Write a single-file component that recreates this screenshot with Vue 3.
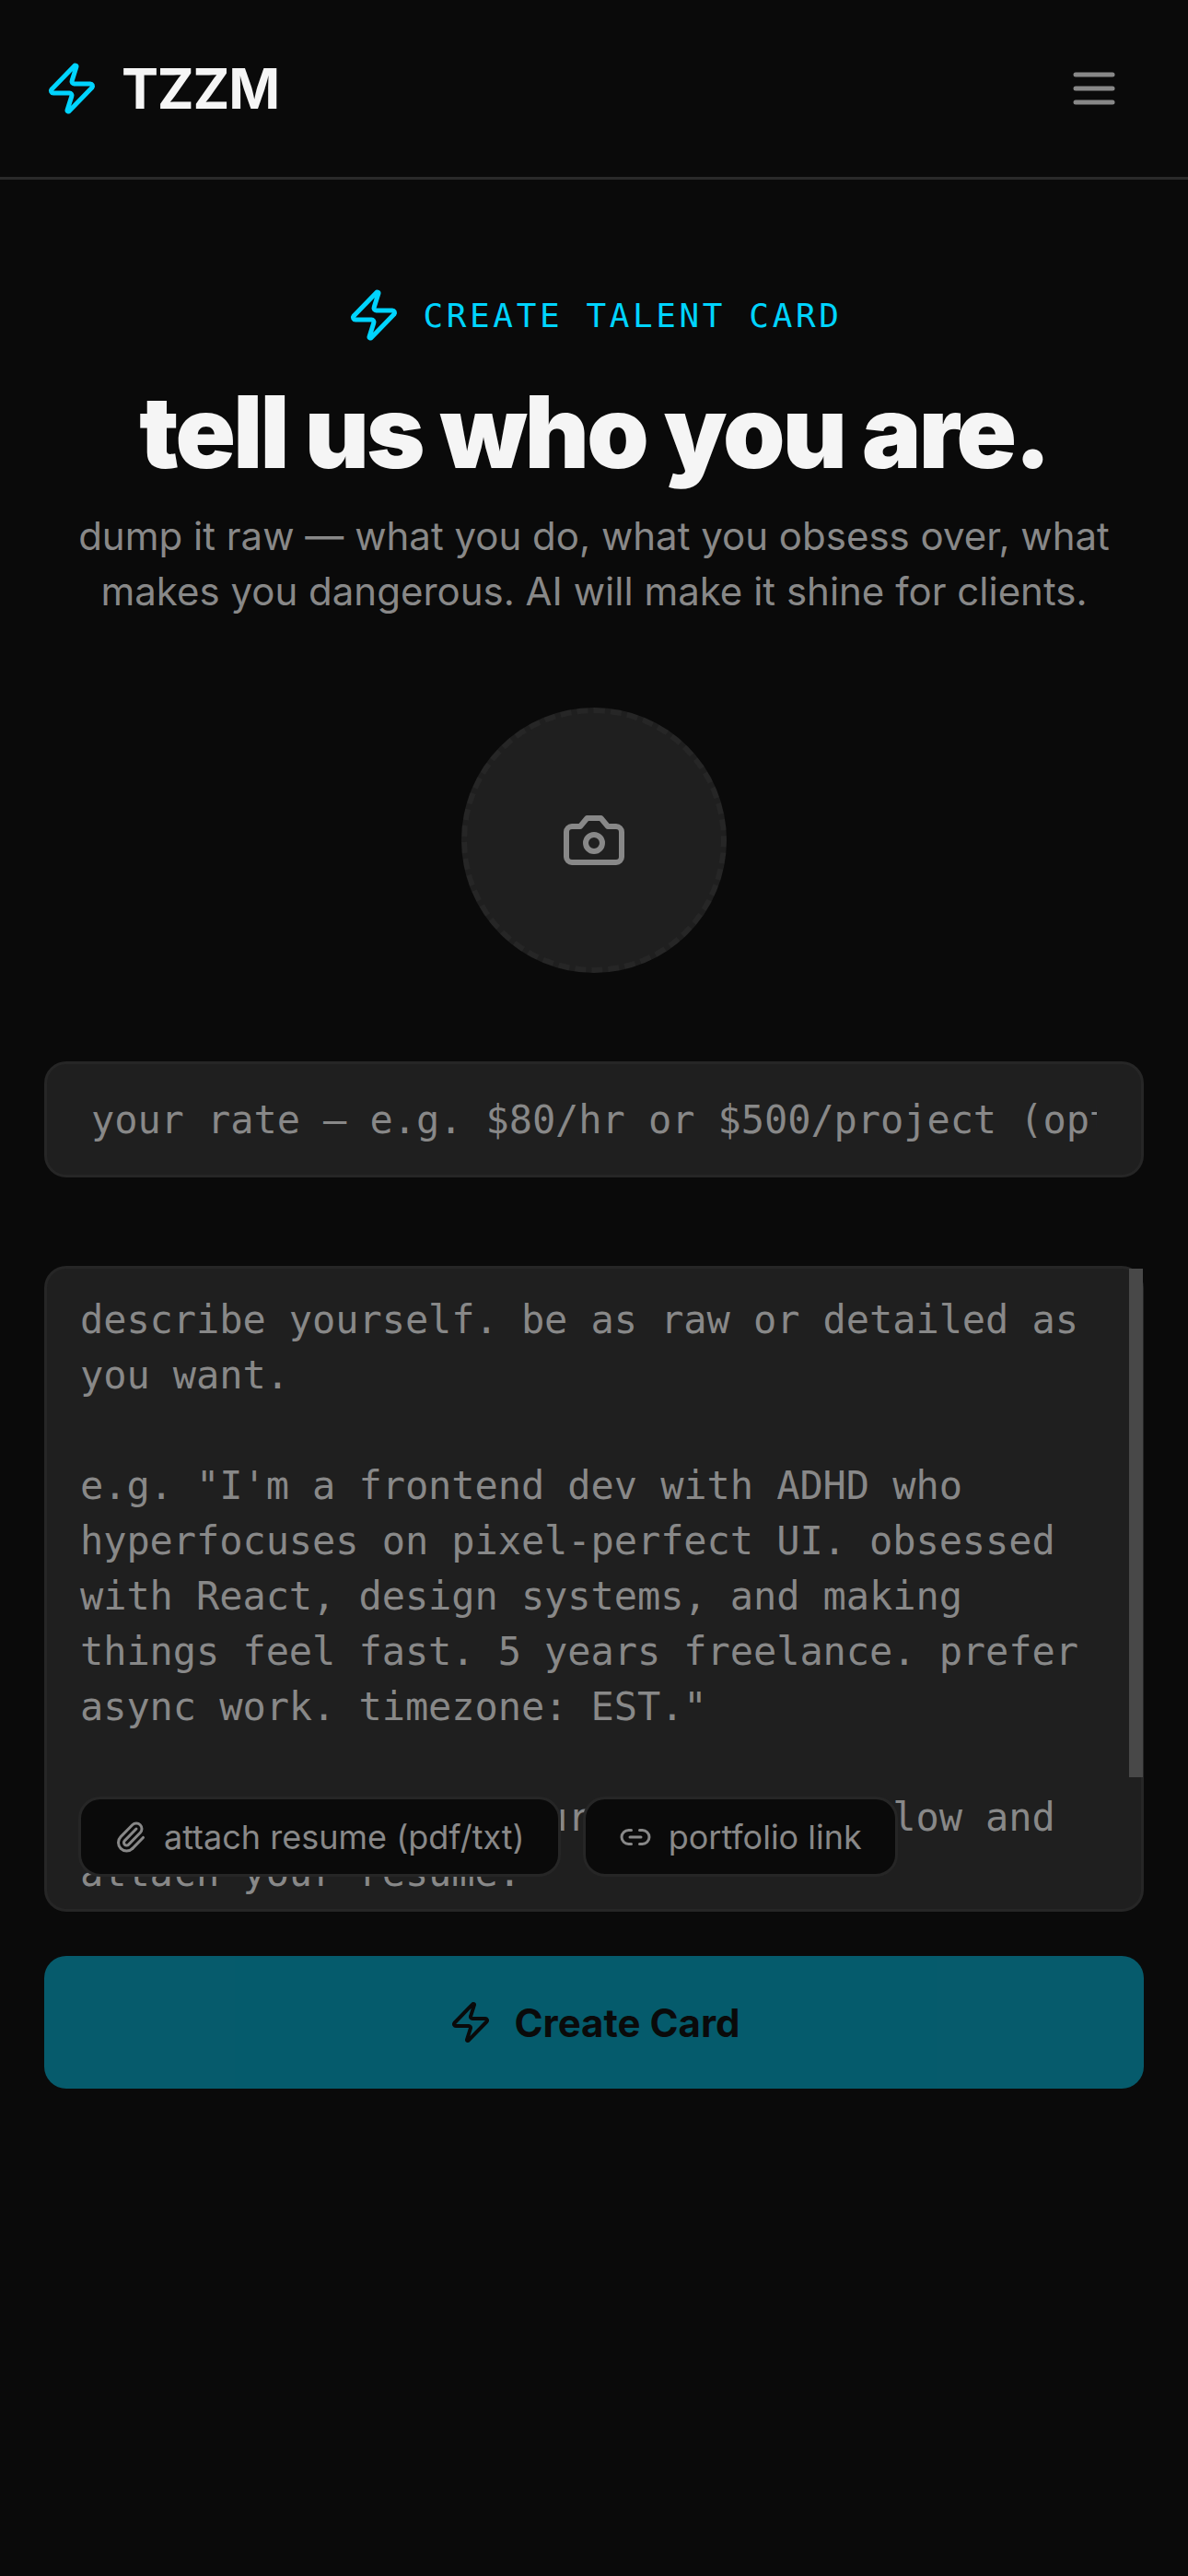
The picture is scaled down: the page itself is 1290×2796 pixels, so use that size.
<template>
  <div class="page">
    <header class="nav">
      <div class="brand">
        <svg class="bolt" viewBox="0 0 24 24"><path :d="zap" /></svg>
        <span class="brand-name">TZZM</span>
      </div>
      <button class="menu-btn" aria-label="menu">
        <svg class="menu-icon" viewBox="0 0 24 24">
          <path d="M4 6h16" />
          <path d="M4 12h16" />
          <path d="M4 18h16" />
        </svg>
      </button>
    </header>

    <main class="content">
      <section class="hero">
        <div class="eyebrow">
          <svg class="bolt" viewBox="0 0 24 24"><path :d="zap" /></svg>
          <span>CREATE TALENT CARD</span>
        </div>
        <h1>tell us who you are.</h1>
        <p>dump it raw — what you do, what you obsess over, what makes you dangerous. AI will make it shine for clients.</p>
      </section>

      <button class="avatar" aria-label="upload photo">
        <svg viewBox="0 0 24 24">
          <path d="M14.5 4h-5L7 7H4a2 2 0 0 0-2 2v9a2 2 0 0 0 2 2h16a2 2 0 0 0 2-2V9a2 2 0 0 0-2-2h-3l-2.5-3z" />
          <circle cx="12" cy="13" r="3" />
        </svg>
      </button>

      <input class="rate" type="text" :placeholder="ratePlaceholder" />

      <div class="about">
        <textarea class="about-input" :placeholder="aboutPlaceholder"></textarea>
        <div class="scroll-thumb"></div>
        <div class="chips">
          <button class="chip">
            <svg viewBox="0 0 24 24">
              <path d="M13.234 20.252 21 12.3" />
              <path d="m16 6-8.414 8.586a2 2 0 0 0 0 2.828 2 2 0 0 0 2.828 0l8.414-8.586a4 4 0 0 0 0-5.656 4 4 0 0 0-5.656 0l-8.415 8.585a6 6 0 1 0 8.486 8.486" />
            </svg>
            attach resume (pdf/txt)
          </button>
          <button class="chip">
            <svg viewBox="0 0 24 24">
              <path d="M9 17H7A5 5 0 0 1 7 7h2" />
              <path d="M15 7h2a5 5 0 1 1 0 10h-2" />
              <path d="M8 12h8" />
            </svg>
            portfolio link
          </button>
        </div>
      </div>

      <button class="submit">
        <svg viewBox="0 0 24 24"><path :d="zap" /></svg>
        Create Card
      </button>
    </main>
  </div>
</template>

<script setup>
const zap = 'M4 14a1 1 0 0 1-.78-1.63l9.9-10.2a.5.5 0 0 1 .86.46l-1.92 6.02A1 1 0 0 0 13 10h7a1 1 0 0 1 .78 1.63l-9.9 10.2a.5.5 0 0 1-.86-.46l1.92-6.02A1 1 0 0 0 11 14z'

const ratePlaceholder = 'your rate — e.g. $80/hr or $500/project (optional)'

const aboutPlaceholder = `describe yourself. be as raw or detailed as you want.

e.g. "I'm a frontend dev with ADHD who hyperfocuses on pixel-perfect UI. obsessed with React, design systems, and making things feel fast. 5 years freelance. prefer async work. timezone: EST."

or drop a link to your portfolio below and attach your resume.`
</script>

<style>
html,
body {
  margin: 0;
  background: #0a0a0a;
}
</style>

<style scoped>
.page {
  min-height: 2796px;
  background: #0a0a0a;
  color: #f5f5f5;
  font-family: Inter, "Noto Sans", sans-serif;
}

svg {
  display: block;
  flex: none;
  fill: none;
  stroke: currentColor;
  stroke-linecap: round;
  stroke-linejoin: round;
  stroke-width: 2;
}

button {
  font-family: inherit;
  cursor: pointer;
}

.nav {
  display: flex;
  align-items: center;
  justify-content: space-between;
  height: 192px;
  padding: 0 48px;
  border-bottom: 3px solid #2a2a2a;
}

.brand {
  display: flex;
  align-items: center;
  gap: 24px;
}

.bolt {
  width: 60px;
  height: 60px;
  color: #00d4ff;
}

.brand-name {
  font-size: 60px;
  font-weight: 700;
  letter-spacing: -1.2px;
  line-height: 72px;
}

.menu-btn {
  padding: 24px;
  border: 0;
  background: none;
  color: #888;
}

.menu-icon {
  width: 60px;
  height: 60px;
}

.content {
  display: flex;
  flex-direction: column;
  padding: 117px 48px 0;
}

.hero {
  display: flex;
  flex-direction: column;
  align-items: center;
  text-align: center;
}

.eyebrow {
  display: flex;
  align-items: center;
  gap: 24px;
  font-family: "DejaVu Sans Mono", monospace;
  font-size: 36px;
  letter-spacing: 3.6px;
  color: #00d4ff;
}

h1 {
  margin: 32px 0 0;
  font-size: 108px;
  font-weight: 900;
  line-height: 130px;
  letter-spacing: -2.7px;
}

.hero p {
  margin: 18px 0 0;
  font-size: 42px;
  line-height: 60px;
  color: #888;
}

.avatar {
  display: flex;
  align-items: center;
  justify-content: center;
  align-self: center;
  box-sizing: border-box;
  width: 288px;
  height: 288px;
  margin-top: 96px;
  padding: 0;
  border: 6px dashed #262626;
  border-radius: 50%;
  background: #1f1f1f;
  color: #888;
}

.avatar svg {
  width: 72px;
  height: 72px;
}

.rate,
.about-input {
  display: block;
  box-sizing: border-box;
  width: 100%;
  margin: 0;
  border: 3px solid #262626;
  border-radius: 24px;
  outline: none;
  background: #1f1f1f;
  color: #f5f5f5;
  font-family: "DejaVu Sans Mono", monospace;
  font-size: 42px;
  letter-spacing: -0.08px;
}

.rate::placeholder,
.about-input::placeholder {
  color: #888;
  opacity: 1;
}

.rate {
  height: 126px;
  margin-top: 96px;
  padding: 0 48px;
}

.about {
  position: relative;
  margin-top: 96px;
}

.about-input {
  height: 701px;
  padding: 26px 36px;
  line-height: 60px;
  resize: none;
  overflow: hidden;
}

.scroll-thumb {
  position: absolute;
  top: 3px;
  right: 1px;
  width: 15px;
  height: 552px;
  background: #484848;
}

.chips {
  position: absolute;
  left: 37px;
  bottom: 38px;
  display: flex;
  gap: 24px;
}

.chip {
  display: flex;
  align-items: center;
  gap: 18px;
  height: 87px;
  padding: 0 36px;
  border: 3px solid #262626;
  border-radius: 24px;
  background: #0a0a0a;
  color: #888;
  font-size: 36px;
}

.chip svg {
  width: 36px;
  height: 36px;
}

.submit {
  display: flex;
  align-items: center;
  justify-content: center;
  gap: 24px;
  height: 144px;
  margin-top: 48px;
  border: 0;
  border-radius: 24px;
  background: #00d4ff;
  color: #0a0a0a;
  font-size: 42px;
  font-weight: 700;
  opacity: 0.4;
}

.submit svg {
  width: 48px;
  height: 48px;
}
</style>
